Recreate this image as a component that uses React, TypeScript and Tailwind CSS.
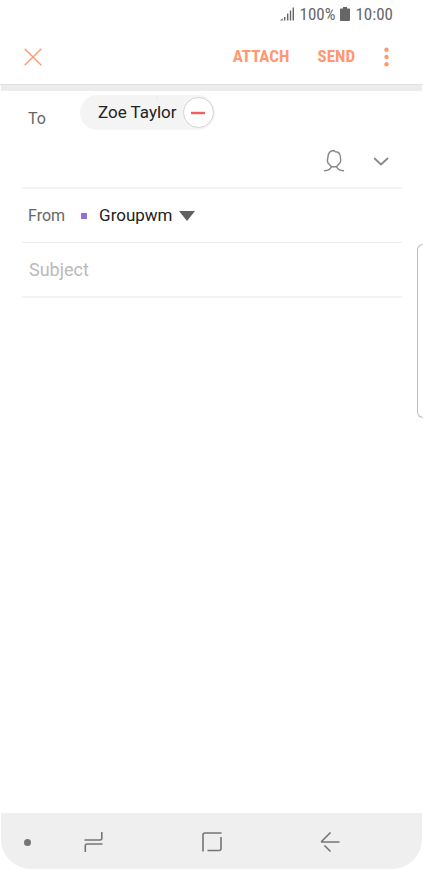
import { useState } from 'react'

const accounts = ['Groupwm']

function StatusBar() {
  return (
    <div className="flex h-7 items-center justify-end gap-1 pr-[30px] font-['Roboto_Condensed','Roboto',sans-serif] text-[17px] leading-7 text-[#666]">
      <svg className="h-4 w-4" viewBox="0 0 16 16" fill="currentColor" aria-hidden="true">
        <path d="M0 14.5h2.6v-2.2zM4 11h1.4v3.5H4zM7 7.5h1.4v7H7zM9.8 4.5h1.4v10h-1.4zM12.6 1.5H14v13h-1.4z" />
      </svg>
      <span>100%</span>
      <svg className="h-4 w-3" viewBox="0 0 12 16" fill="currentColor" aria-hidden="true">
        <path d="M4 1h4v1.5h2.2q.8 0 .8.8V14q0 1-1 1H2q-1 0-1-1V3.3q0-.8.8-.8H4z" />
      </svg>
      <span>10:00</span>
    </div>
  )
}

function Toolbar() {
  return (
    <header className="flex h-[57px] items-center border-b border-[#e0e0e0] pt-0.5 pr-6 pl-5 font-['Roboto_Condensed','Roboto',sans-serif] text-[17px] font-bold text-[#ff9870]">
      <button type="button" aria-label="Close" className="p-1">
        <svg className="h-[18px] w-[18px]" viewBox="0 0 18 18" fill="none" stroke="currentColor" strokeWidth="1.4">
          <path d="M.7.7l16.6 16.6M17.3.7L.7 17.3" />
        </svg>
      </button>
      <button type="button" className="ml-auto">ATTACH</button>
      <button type="button" className="ml-7">SEND</button>
      <button type="button" aria-label="More options" className="ml-5 p-1">
        <svg className="h-5 w-4" viewBox="0 0 16 20" fill="currentColor">
          <circle cx="7.5" cy="2.8" r="2.2" />
          <circle cx="7.5" cy="10" r="2.2" />
          <circle cx="7.5" cy="17.2" r="2.2" />
        </svg>
      </button>
    </header>
  )
}

function Recipients() {
  const [recipients, setRecipients] = useState(['Zoe Taylor'])

  return (
    <div className="border-b-2 border-[#f3f3f3] pt-1">
      <div className="flex items-start">
        <label htmlFor="to" className="w-[58px] pt-3 pl-1.5 text-[#666]">To</label>
        {recipients.map((name) => (
          <span key={name} className="flex h-[35px] items-center gap-1.5 rounded-full bg-[#f4f4f4] pr-px pl-[18px] text-[17px] text-[#222]">
            {name}
            <button
              type="button"
              aria-label={`Remove ${name}`}
              onClick={() => setRecipients(recipients.filter((item) => item !== name))}
              className="flex h-[31px] w-[31px] items-center justify-center rounded-full border border-[#d4d4d4] bg-white"
            >
              <svg className="h-3.5 w-3.5" viewBox="0 0 14 14" fill="none" stroke="#f0605c" strokeWidth="2.4">
                <path d="M0 7h14" />
              </svg>
            </button>
          </span>
        ))}
        <input id="to" type="text" className="h-9 min-w-0 flex-1 px-2 outline-none" />
      </div>
      <div className="flex h-14 items-center justify-end gap-5 pt-1 pr-2 text-[#888]">
        <button type="button" aria-label="Contacts" className="p-1">
          <svg className="h-6 w-6" viewBox="0 0 24 24" fill="none" stroke="currentColor" strokeWidth="1.4" strokeLinecap="round" strokeLinejoin="round">
            <path d="M12 1.5C8.5 1.6 6.3 3.8 6.1 7.5L5.3 11.5L6 14L9.5 17.7H14.5L18 13.8L18.8 11.5L18.3 7.5C18 4.8 16.2 2.8 13.3 2.8L12 1.5" />
            <path d="M9.5 17.7C8.5 20 5.5 21.6 2.5 21.7M14.5 17.7C15.5 20 18.5 21.6 21.5 21.7" />
          </svg>
        </button>
        <button type="button" aria-label="Show Cc and Bcc" className="p-1">
          <svg className="h-4 w-4" viewBox="0 0 16 16" fill="none" stroke="currentColor" strokeWidth="1.8">
            <path d="M0 5l7 6.5L14 5" />
          </svg>
        </button>
      </div>
    </div>
  )
}

function Sender() {
  return (
    <div className="flex h-[54px] items-center border-b border-[#ebebeb] pl-1.5">
      <label htmlFor="from" className="text-[#666]">From</label>
      <span className="ml-4 h-1.5 w-1.5 bg-[#9370db]" />
      <select id="from" className="ml-3 w-24 appearance-none bg-transparent text-[17px] text-[#222] outline-none">
        {accounts.map((account) => (
          <option key={account}>{account}</option>
        ))}
      </select>
      <svg className="pointer-events-none -ml-4 h-2.5 w-4" viewBox="0 0 16 10" fill="#606060" aria-hidden="true">
        <path d="M0 0h16L8 10z" />
      </svg>
    </div>
  )
}

function NavigationBar() {
  return (
    <nav className="mx-px mb-px flex h-14 items-center rounded-b-[30px] bg-[#efefef] pt-0.5 text-[#757575]">
      <div className="flex w-[52px] justify-center">
        <span className="h-[7px] w-[7px] rounded-full bg-[#757575]" />
      </div>
      <div className="flex flex-1 justify-between pr-[82px] pl-[30px]">
        <button type="button" aria-label="Recents">
          <svg className="h-[22px] w-5" viewBox="0 0 20 22" fill="none" stroke="currentColor" strokeWidth="1.6">
            <path d="M1.5 9H17Q18.8 9 18.8 7.3V1M19.5 13H4Q2.3 13 2.3 14.7V21" />
          </svg>
        </button>
        <button type="button" aria-label="Home">
          <svg className="h-[22px] w-5" viewBox="0 0 20 22" fill="none" stroke="currentColor" strokeWidth="1.6">
            <path d="M1 20.5V4Q1 2 3 2H19.5M19 6V17.5Q19 19.5 17 19.5H5.5" />
          </svg>
        </button>
        <button type="button" aria-label="Back">
          <svg className="h-[22px] w-5" viewBox="0 0 20 22" fill="none" stroke="currentColor" strokeWidth="1.6">
            <path d="M10.5 1.5L1.8 10.2Q1.2 11 2.2 11H19.5M4.5 14.5L10.5 20.5" />
          </svg>
        </button>
      </div>
    </nav>
  )
}

export default function App() {
  const [subject, setSubject] = useState('')

  return (
    <div className="relative flex min-h-screen flex-col overflow-hidden bg-white font-['Roboto',sans-serif] text-base">
      <StatusBar />
      <Toolbar />
      <div className="mx-px h-1.5 bg-[#ececec]" />
      <main className="flex-1 pr-[21px] pl-[22px]">
        <Recipients />
        <Sender />
        <input
          type="text"
          aria-label="Subject"
          placeholder="Subject"
          value={subject}
          onChange={(event) => setSubject(event.target.value)}
          className="h-[55px] w-full border-b-2 border-[#f3f3f3] pl-[7px] text-lg text-[#222] outline-none placeholder:text-[#bababa]"
        />
      </main>
      {/* edge panel handle */}
      <div className="absolute top-[244px] right-0 h-[174px] w-1.5 rounded-l-md border border-r-0 border-[#bcbcbc] bg-white" />
      <NavigationBar />
    </div>
  )
}
